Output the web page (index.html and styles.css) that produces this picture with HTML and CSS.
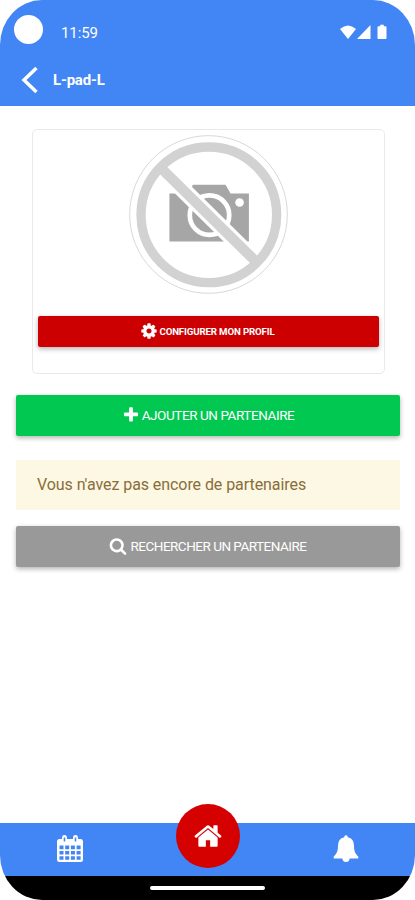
FILE: index.html
```
<!DOCTYPE html>
<html lang="fr">
<head>
    <meta charset="UTF-8">
    <meta name="viewport" content="width=device-width, initial-scale=1.0">
    <title>L-pad-L</title>
    <link rel="stylesheet" href="styles.css">
</head>
<body>
    <div class="phone">
        <header class="header">
            <div class="status-bar">
                <span class="camera-hole"></span>
                <span class="time">11:59</span>
                <svg class="status-icons" viewBox="0 0 48 16">
                    <path d="M0 5Q8-2 16 5L8 15z"/>
                    <path d="M17 15L30.500 1V15z"/>
                    <path d="M37.500 3.200q0-1 1-1h1.700V.7h3.600v1.500h1.700q1 0 1 1v10.800q0 1-1 1h-7q-1 0-1-1z"/>
                </svg>
            </div>
            <div class="title-bar">
                <svg class="back" viewBox="0 0 18 28"><path d="M15.500 2L3 14l12.500 12"/></svg>
                <h1>L-pad-L</h1>
            </div>
        </header>

        <main class="content">
            <div class="card">
                <svg class="no-photo" viewBox="41 28 476 476">
                    <circle class="outline" cx="279" cy="266" r="236"/>
                    <path class="camera" d="M162 203H222L232 177H330L345 203H400V347H162z"/>
                    <circle class="lens" cx="282" cy="268" r="59"/>
                    <circle class="flash" cx="372" cy="230" r="13"/>
                    <path class="slash-edge" d="M150 140L411 397"/>
                    <circle class="ring" cx="280" cy="267" r="203"/>
                    <path class="slash" d="M140 130L421 407"/>
                </svg>
                <button class="btn btn-red">
                    <svg class="icon" viewBox="0 0 1792 1792"><path d="M1152 896q0-106-75-181t-181-75-181 75-75 181 75 181 181 75 181-75 75-181zm512-109v222q0 12-8 23t-20 13l-185 28q-19 54-39 91 35 50 107 138 10 12 10 25t-9 23q-27 37-99 108t-94 71q-12 0-26-9l-138-108q-44 23-91 38-16 136-29 186-7 28-36 28h-222q-14 0-24.500-8.500t-11.500-21.500l-28-184q-49-16-90-37l-141 107q-10 9-25 9-14 0-25-11-126-114-165-168-7-10-7-23 0-12 8-23 15-21 51-66.500t54-70.500q-27-50-41-99l-183-27q-13-2-21-12.500t-8-23.500v-222q0-12 8-23t19-13l186-28q14-46 39-92-40-57-107-138-10-12-10-24 0-10 9-23 26-36 98.500-107.500t94.500-71.500q13 0 26 10l138 107q44-23 91-38 16-136 29-186 7-28 36-28h222q14 0 24.500 8.500t11.500 21.500l28 184q49 16 90 37l142-107q9-9 24-9 13 0 25 10 129 119 165 170 7 8 7 22 0 12-8 23-15 21-51 66.500t-54 70.500q26 50 41 98l183 28q13 2 21 12.500t8 23.500z"/></svg>
                    <span>CONFIGURER MON PROFIL</span>
                </button>
            </div>

            <button class="btn btn-green">
                <svg class="icon" viewBox="0 0 1792 1792"><path d="M1600 736v192q0 40-28 68t-68 28h-416v416q0 40-28 68t-68 28h-192q-40 0-68-28t-28-68v-416h-416q-40 0-68-28t-28-68v-192q0-40 28-68t68-28h416v-416q0-40 28-68t68-28h192q40 0 68 28t28 68v416h416q40 0 68 28t28 68z"/></svg>
                <span>AJOUTER UN PARTENAIRE</span>
            </button>

            <div class="alert">Vous n'avez pas encore de partenaires</div>

            <button class="btn btn-gray">
                <svg class="icon" viewBox="0 0 1792 1792"><path d="M1216 832q0-185-131.500-316.500t-316.500-131.500-316.500 131.500-131.500 316.500 131.500 316.500 316.500 131.500 316.500-131.500 131.500-316.500zm512 832q0 52-38 90t-90 38q-54 0-90-38l-343-342q-179 124-399 124-143 0-273.500-55.500t-225-150-150-225-55.500-273.500 55.500-273.500 150-225 225-150 273.500-55.500 273.500 55.500 225 150 150 225 55.500 273.500q0 220-124 399l343 343q37 37 37 90z"/></svg>
                <span>RECHERCHER UN PARTENAIRE</span>
            </button>
        </main>

        <nav class="tab-bar">
            <a class="tab">
                <svg class="calendar" viewBox="0 0 26 28">
                    <path fill-rule="evenodd" d="M2.500 4H5V3q0-3 2.500-3T10 3v1h6V3q0-3 2.500-3T21 3v1h2.500Q26 4 26 6.500v18q0 2.500-2.500 2.500h-21Q0 27 0 24.500v-18Q0 4 2.500 4zM6.700 2.500v4h1.600v-4zM17.700 2.500v4h1.600v-4zM2.500 10.500v3.700h4v-3.700zM8.200 10.500v3.700h4v-3.700zM13.900 10.500v3.700h4v-3.700zM19.600 10.500v3.700h4v-3.700zM2.500 15.900v3.700h4v-3.700zM8.200 15.900v3.700h4v-3.700zM13.900 15.900v3.700h4v-3.700zM19.600 15.900v3.700h4v-3.700zM2.500 21.300v3.500h4v-3.500zM8.200 21.300v3.500h4v-3.500zM13.900 21.300v3.500h4v-3.500zM19.600 21.300v3.500h4v-3.500z"/>
                </svg>
            </a>
            <a class="tab home">
                <svg viewBox="0 0 1792 1792"><path d="M1472 992v480q0 26-19 45t-45 19h-384v-384h-256v384h-384q-26 0-45-19t-19-45v-480q0-1 .5-3t.5-3l575-474 575 474q1 2 1 6zm223-69l-62 74q-8 9-21 11h-3q-13 0-21-7l-692-577-692 577q-12 8-24 7-13-2-21-11l-62-74q-8-10-7-23.500t11-21.500l719-599q32-26 76-26t76 26l244 204v-195q0-14 9-23t23-9h192q14 0 23 9t9 23v408l219 182q10 8 11 21.500t-7 23.500z"/></svg>
            </a>
            <a class="tab">
                <svg class="bell" viewBox="0 0 26 28">
                    <path d="M11.200 2.200Q11.200.3 13 .3t1.800 1.900Q21 3.500 21 10.500C21 17 23 19.500 25.300 21.500V23.500H16.700Q16.200 27 13 27T9.300 23.500H.7V21.500C3 19.500 5 17 5 10.500Q5 3.500 11.200 2.200z"/>
                </svg>
            </a>
        </nav>
        <div class="gesture-bar"><span></span></div>
    </div>
</body>
</html>
```
FILE: styles.css
```
* {
    box-sizing: border-box;
}
body {
    margin: 0;
    background-color: #fff;
    font-family: Roboto, sans-serif;
}
svg {
    display: block;
    flex: none;
    fill: #fff;
}
.phone {
    display: flex;
    flex-direction: column;
    width: 415px;
    height: 900px;
    overflow: hidden;
    background-color: #fff;
    border-radius: 42px / 45px;
}
.header {
    height: 105.5px;
    background-color: #4285f4;
    color: #fff;
}
.status-bar {
    display: flex;
    align-items: center;
    height: 58px;
    padding: 0 27px 0 14px;
}
.camera-hole {
    width: 29px;
    height: 29px;
    border-radius: 50%;
    background-color: #fff;
}
.time {
    margin: 8px auto 0 18px;
    font-size: 15px;
    letter-spacing: -0.1px;
}
.status-icons {
    width: 48px;
    height: 16px;
    margin-top: 6px;
}
.title-bar {
    display: flex;
    align-items: center;
    height: 43px;
    padding-left: 21px;
}
.back {
    width: 18px;
    height: 28px;
    fill: none;
    stroke: #fff;
    stroke-width: 3.5;
}
h1 {
    margin: 0 0 0 14px;
    font-size: 15px;
    font-weight: 700;
    letter-spacing: -0.2px;
}
.content {
    flex: 1;
    padding: 23px 15px 0 16px;
}
.card {
    height: 245.5px;
    margin: 0 15px 0 16px;
    padding: 5px;
    border: 1px solid #e9e9e9;
    border-radius: 5px;
}
.no-photo {
    width: 159px;
    height: 159px;
    margin: 0 auto 22.5px;
}
.outline {
    fill: #fff;
    stroke: #c4c4c4;
    stroke-width: 2;
}
.camera {
    fill: #a6a6a6;
}
.lens {
    fill: none;
    stroke: #fff;
    stroke-width: 14;
}
.slash-edge {
    stroke: #fff;
    stroke-width: 50;
}
.ring {
    fill: none;
    stroke: #d2d2d2;
    stroke-width: 28;
}
.slash {
    stroke: #d2d2d2;
    stroke-width: 31;
}
.btn {
    display: flex;
    align-items: center;
    justify-content: center;
    width: 100%;
    padding: 0;
    border: 0;
    border-radius: 2px;
    color: #fff;
    font-family: inherit;
    white-space: nowrap;
    box-shadow: 0 2px 5px rgba(0, 0, 0, 0.3);
}
.btn-red {
    gap: 1px;
    height: 31px;
    padding: 0 2px 1px 0;
    background-color: #c00;
    font-size: 9.7px;
    font-weight: 700;
    letter-spacing: -0.15px;
}
.btn-red .icon {
    width: 18px;
    height: 18px;
}
.btn-green {
    gap: 2px;
    height: 41.5px;
    margin-top: 20.5px;
    padding-bottom: 1px;
    background-color: #00c851;
    font-size: 13.5px;
    letter-spacing: -0.43px;
}
.btn-gray {
    gap: 3px;
    height: 41.5px;
    padding-bottom: 1px;
    background-color: #999;
    font-size: 13.5px;
    letter-spacing: -0.5px;
}
.btn-green .icon,
.btn-gray .icon {
    width: 18px;
    height: 18px;
}
.alert {
    height: 50px;
    margin: 24px 0 15.5px;
    padding-left: 21px;
    background-color: #fcf8e3;
    color: #8a6d3b;
    font-size: 16px;
    line-height: 49px;
    letter-spacing: -0.07px;
}
.tab-bar {
    display: flex;
    justify-content: space-around;
    height: 53px;
    padding-left: 1px;
    background-color: #4285f4;
}
.tab {
    display: flex;
    align-items: center;
    justify-content: center;
    width: 64px;
}
.calendar,
.bell {
    width: 26px;
    height: 28px;
}
/* round home button sticks out above the bar */
.home {
    height: 64px;
    margin-top: -19px;
    border-radius: 50%;
    background-color: #d50000;
}
.home svg {
    width: 30px;
    height: 30px;
}
.gesture-bar {
    display: flex;
    align-items: center;
    justify-content: center;
    height: 24.5px;
    background-color: #000;
}
.gesture-bar span {
    width: 115px;
    height: 4px;
    border-radius: 2px;
    background-color: #fff;
}
```
